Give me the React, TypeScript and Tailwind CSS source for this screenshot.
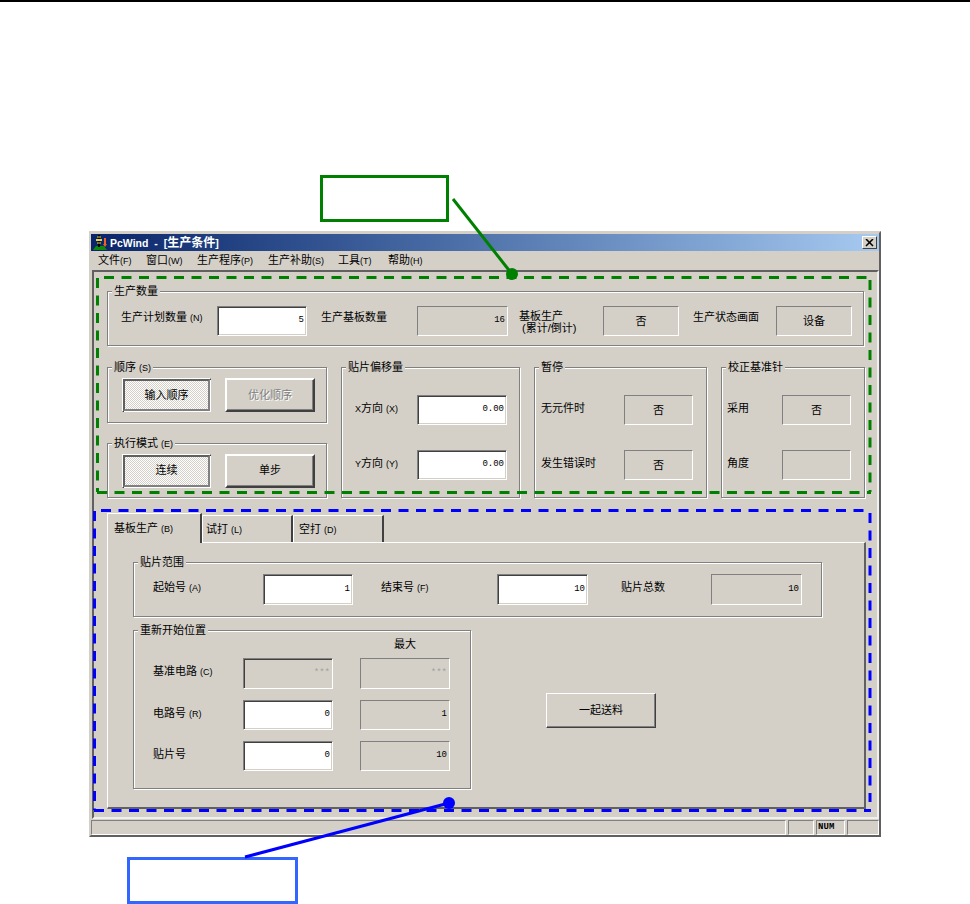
import React from "react";

const sunken = "border border-[#808080] border-r-white border-b-white";
const editFrame = "border border-[#808080] border-r-white border-b-white shadow-[inset_1px_1px_0_#404040,inset_-1px_-1px_0_#d4d0c8]";
const raised = "border border-white border-r-[#404040] border-b-[#404040] shadow-[inset_-1px_-1px_0_#808080]";

function Mn({ k }: { k: string }) {
  return <span className="font-['Liberation_Sans',sans-serif] text-[9px]">({k})</span>;
}

function Label({ children, className = "" }: { children: React.ReactNode; className?: string }) {
  return <div className={`whitespace-pre leading-none -translate-y-[2px] ${className}`}>{children}</div>;
}

function Field({ value, className, kind = "box", center, gray }: { value?: string; className: string; kind?: "box" | "edit" | "dis"; center?: boolean; gray?: boolean }) {
  const base = kind === "edit" ? `${editFrame} bg-white` : kind === "dis" ? editFrame : sunken;
  return (
    <div className={`${base} ${className} shrink-0 flex items-center ${center ? "justify-center text-[11px]" : "justify-end pr-[2px] font-['Liberation_Mono',monospace] text-[9px]"} ${gray ? "text-[#a0a0a0]" : "text-black"}`}>
      {value}
    </div>
  );
}

function Group({ title, className, children }: { title: React.ReactNode; className: string; children?: React.ReactNode }) {
  return (
    <div className={`relative border border-[#808080] shadow-[1px_1px_0_#fff,inset_1px_1px_0_#fff] ${className}`}>
      <div className="absolute -top-[7px] left-[4px] bg-[#d4d0c8] px-[2px] text-[11px] leading-[13px] whitespace-pre">{title}</div>
      {children}
    </div>
  );
}

function Btn({ label, state = "normal" }: { label: string; state?: "normal" | "checked" | "disabled" }) {
  if (state === "checked") {
    return (
      <div className="w-[89px] h-[34px] shrink-0 border border-white border-r-[#404040] border-b-[#404040] bg-[#d4d0c8]">
        <div className="w-full h-full border-2 border-[#606060] border-r-[#808080] border-b-[#808080] shadow-[1px_1px_0_#fff] flex items-center justify-center text-[11px] bg-[repeating-conic-gradient(#ffffff_0_25%,#d4d0c8_0_50%)] bg-[length:2px_2px]">
          {label}
        </div>
      </div>
    );
  }
  return (
    <div className={`w-[90px] h-[34px] shrink-0 border-2 border-white border-r-[#404040] border-b-[#404040] shadow-[inset_-1px_-1px_0_#808080] flex items-center justify-center text-[11px] ${state === "disabled" ? "text-[#808080] [text-shadow:1px_1px_0_#fff]" : ""}`}>
      {label}
    </div>
  );
}

function Tab({ label, k, active, className }: { label: string; k: string; active?: boolean; className: string }) {
  return (
    <div className={`border-t border-l border-white border-r-2 border-r-[#404040] flex items-center shrink-0 text-[11px] leading-none ${active ? "h-[30px] -mb-[1px] bg-[#d4d0c8] relative z-10" : "h-[27px]"} ${className}`}>
      <span className="whitespace-pre">{label} <Mn k={k} /></span>
    </div>
  );
}

function Menu({ label, k, className }: { label: string; k: string; className: string }) {
  return <div className={`shrink-0 whitespace-pre ${className}`}>{label}<Mn k={k} /></div>;
}

export default function App() {
  return (
    <div className="relative w-[970px] h-[904px] bg-white overflow-hidden text-black font-['Liberation_Sans','Noto_Sans_CJK_SC',sans-serif]">
      <div className="h-[2px] bg-black" />
      <div className="pt-[229px] pl-[89px]">
        {/* Window */}
        <div className="w-[792px] h-[606px] bg-[#d4d0c8] border-2 border-[#d4d0c8] border-r-[#606060] border-b-[#606060] pt-[1px] text-[11px]">
          {/* Title */}
          <div className="h-[17px] bg-gradient-to-r from-[#0a246a] to-[#a6caf0] flex items-center pl-[1px] pr-[2px]">
            <svg width="17" height="17" viewBox="0 0 17 17" className="shrink-0">
              <path d="M1 16 L4 12 H12 L15 16 Z" fill="#0a8a0a" />
              <path d="M7 1 V13" stroke="#000" strokeWidth="2" />
              <path d="M4 6 H10" stroke="#e8d040" strokeWidth="2" />
              <path d="M5 3 H9 M5 9 H9" stroke="#e8d040" strokeWidth="1" />
              <path d="M13 4 V11" stroke="#f06020" strokeWidth="2" />
              <path d="M11 10 L13 13 L15 10 Z" fill="#f06020" />
            </svg>
            <span className="ml-[1px] text-white font-bold text-[12px] leading-none whitespace-pre">
              <span className="font-['Liberation_Sans',sans-serif] text-[10.5px] [word-spacing:3px]">PcWind - [</span>生产条件<span className="font-['Liberation_Sans',sans-serif] text-[10.5px]">]</span>
            </span>
            <div className="ml-auto w-[15px] h-[13px] bg-[#d4d0c8] border border-white border-r-[#404040] border-b-[#404040] flex items-center justify-center">
              <svg width="9" height="8" viewBox="0 0 9 8"><path d="M1 0 L8 7 M8 0 L1 7" stroke="#000" strokeWidth="1.5" /></svg>
            </div>
          </div>
          {/* Menu */}
          <div className="h-[19px] flex items-center pl-[7px] leading-none">
            <Menu label="文件" k="F" className="w-[48px]" />
            <Menu label="窗口" k="W" className="w-[51px]" />
            <Menu label="生产程序" k="P" className="w-[71px]" />
            <Menu label="生产补助" k="S" className="w-[70px]" />
            <Menu label="工具" k="T" className="w-[50px]" />
            <Menu label="帮助" k="H" className="w-[50px]" />
          </div>
          {/* Client */}
          <div className="ml-[1px] w-[787px] h-[549px] border-2 border-[#606060] border-r-[#f0f0f0] border-b-[#f0f0f0] pt-[19px] pl-[13px]">
            <Group title="生产数量" className="w-[757px] h-[55px] flex items-center pl-[13px] pt-[5px]">
              <Label className="w-[96px] pb-[4px]">生产计划数量 <Mn k="N" /></Label>
              <Field kind="edit" value="5" className="w-[90px] h-[30px]" />
              <Label className="w-[110px] pl-[14px] pb-[4px]">生产基板数量</Label>
              <Field value="16" className="w-[91px] h-[30px]" />
              <div className="w-[95px] pl-[11px] leading-[12px] whitespace-pre translate-y-[1px]">
                <div>基板生产</div>
                <div> (累计/倒计)</div>
              </div>
              <Field value="否" center className="w-[76px] h-[30px]" />
              <Label className="w-[97px] pl-[14px] pb-[4px]">生产状态画面</Label>
              <Field value="设备" center className="w-[76px] h-[30px]" />
            </Group>

            <div className="flex gap-[14px] mt-[21px] h-[131px]">
              <div className="w-[220px] flex flex-col gap-[20px]">
                <Group title={<>顺序 <Mn k="S" /></>} className="h-[56px] flex items-center gap-[14px] pl-[14px]">
                  <Btn label="输入顺序" state="checked" />
                  <Btn label="优化顺序" state="disabled" />
                </Group>
                <Group title={<>执行模式 <Mn k="E" /></>} className="h-[55px] flex items-center gap-[14px] pl-[14px]">
                  <Btn label="连续" state="checked" />
                  <Btn label="单步" />
                </Group>
              </div>
              <Group title="贴片偏移量" className="w-[179px] pt-[27px] pl-[13px] flex flex-col gap-[25px]">
                <div className="flex items-center">
                  <Label className="w-[62px]"><span className="text-[9px]">X</span>方向 <Mn k="X" /></Label>
                  <Field kind="edit" value="0.00" className="w-[90px] h-[30px]" />
                </div>
                <div className="flex items-center">
                  <Label className="w-[62px]"><span className="text-[9px]">Y</span>方向 <Mn k="Y" /></Label>
                  <Field kind="edit" value="0.00" className="w-[90px] h-[30px]" />
                </div>
              </Group>
              <Group title="暂停" className="w-[173px] pt-[27px] pl-[6px] flex flex-col gap-[25px]">
                <div className="flex items-center">
                  <Label className="w-[83px]">无元件时</Label>
                  <Field value="否" center className="w-[69px] h-[30px]" />
                </div>
                <div className="flex items-center">
                  <Label className="w-[83px]">发生错误时</Label>
                  <Field value="否" center className="w-[69px] h-[30px]" />
                </div>
              </Group>
              <Group title="校正基准针" className="w-[144px] pt-[27px] pl-[5px] flex flex-col gap-[25px]">
                <div className="flex items-center">
                  <Label className="w-[55px]">采用</Label>
                  <Field value="否" center className="w-[69px] h-[30px]" />
                </div>
                <div className="flex items-center">
                  <Label className="w-[55px]">角度</Label>
                  <Field className="w-[69px] h-[30px]" />
                </div>
              </Group>
            </div>

            {/* Tabs */}
            <div className="mt-[15px] w-[759px]">
              <div className="flex items-end h-[29px]">
                <Tab label="基板生产" k="B" active className="w-[95px] pl-[6px]" />
                <Tab label="试打" k="L" className="w-[91px] pl-[3px]" />
                <Tab label="空打" k="D" className="w-[91px] pl-[5px]" />
              </div>
              <div className="h-[267px] border border-white border-r-2 border-b-2 border-r-[#606060] border-b-[#606060] pt-[19px] pl-[25px]">
                <Group title="贴片范围" className="w-[689px] h-[55px] flex items-center pl-[19px]">
                  <Label className="w-[110px]">起始号 <Mn k="A" /></Label>
                  <Field kind="edit" value="1" className="w-[90px] h-[31px]" />
                  <Label className="w-[144px] pl-[28px]">结束号 <Mn k="F" /></Label>
                  <Field kind="edit" value="10" className="w-[91px] h-[31px]" />
                  <Label className="w-[123px] pl-[33px]">贴片总数</Label>
                  <Field value="10" className="w-[91px] h-[31px]" />
                </Group>
                <div className="flex items-start mt-[13px]">
                  <Group title="重新开始位置" className="w-[338px] h-[159px] shrink-0 pl-[19px]">
                    <div className="h-[27px] pl-[241px] pt-[8px] leading-none">最大</div>
                    <div className="flex flex-col gap-[11px]">
                      <div className="flex items-center">
                        <Label className="w-[90px]">基准电路 <Mn k="C" /></Label>
                        <Field kind="dis" gray value="***" className="w-[90px] h-[31px]" />
                        <Field gray value="***" className="w-[90px] h-[31px] ml-[27px]" />
                      </div>
                      <div className="flex items-center">
                        <Label className="w-[90px]">电路号 <Mn k="R" /></Label>
                        <Field kind="edit" value="0" className="w-[90px] h-[30px]" />
                        <Field value="1" className="w-[90px] h-[30px] ml-[27px]" />
                      </div>
                      <div className="flex items-center">
                        <Label className="w-[90px]">贴片号</Label>
                        <Field kind="edit" value="0" className="w-[90px] h-[30px]" />
                        <Field value="10" className="w-[90px] h-[30px] ml-[27px]" />
                      </div>
                    </div>
                  </Group>
                  <div className={`${raised} ml-[75px] mt-[63px] w-[110px] h-[35px] flex items-center justify-center`}>一起送料</div>
                </div>
              </div>
            </div>
          </div>
          {/* Status bar */}
          <div className="mt-[1px] h-[15px] flex gap-[2px] font-['Liberation_Mono',monospace] text-[9px] leading-none">
            <div className={`${sunken} w-[696px]`} />
            <div className={`${sunken} w-[26px]`} />
            <div className={`${sunken} w-[29px] flex items-center pl-[1px] font-bold`}>NUM</div>
            <div className={`${sunken} w-[32px]`} />
          </div>
        </div>
      </div>

      {/* Annotation overlay */}
      <svg className="absolute inset-0 pointer-events-none" width="970" height="904" viewBox="0 0 970 904">
        <path d="M104 277.5 H867 M870 280 V492 M97.5 278 V492 M97 492.5 H871" fill="none" stroke="#008000" strokeWidth="3" strokeDasharray="10 7.5" />
        <rect x="321.5" y="176.5" width="126" height="44" fill="none" stroke="#008000" strokeWidth="3" />
        <path d="M453 199 L512 274" stroke="#008000" strokeWidth="3" />
        <circle cx="512" cy="274" r="6" fill="#008000" />
        <path d="M101 510.5 H870 M870 513 V802 M94.5 511 V810 M94 810.5 H871" fill="none" stroke="#0000ff" strokeWidth="3" strokeDasharray="10 7.5" />
        <rect x="128.5" y="858.5" width="168" height="44" fill="none" stroke="#3366ff" strokeWidth="3" />
        <path d="M245 857 L449 803" stroke="#0000ff" strokeWidth="3" />
        <circle cx="449" cy="803" r="6" fill="#0000ff" />
      </svg>
    </div>
  );
}
